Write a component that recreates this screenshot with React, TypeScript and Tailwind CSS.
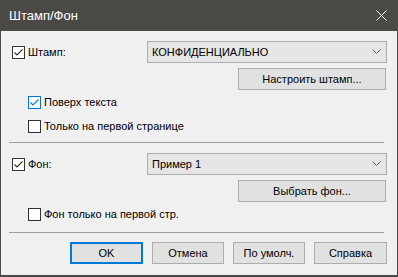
import React from "react";

const font = { fontFamily: '"Liberation Sans", Arial, sans-serif' };

function Check({ checked, focus }: { checked?: boolean; focus?: boolean }) {
  const border = focus ? "border-[#0078d7]" : "border-[#333333]";
  const stroke = focus ? "#0078d7" : "#333333";
  return (
    <div className={`w-[13px] h-[13px] border ${border} bg-white flex items-center justify-center shrink-0`}>
      {checked && (
        <svg width="11" height="11" viewBox="0 0 11 11">
          <path d="M1.5 5.5 L4 8 L9.5 2.5" fill="none" stroke={stroke} strokeWidth="1.1" />
        </svg>
      )}
    </div>
  );
}

function Combo({ text }: { text: string }) {
  return (
    <div className="w-[240px] h-[22px] border border-[#adadad] bg-[#e5e5e5] flex items-center pl-[4px] pr-[5px]">
      <span className="flex-1 text-[11px] text-black leading-none">{text}</span>
      <svg width="9" height="6" viewBox="0 0 9 6">
        <path d="M0.5 0.5 L4.5 4.5 L8.5 0.5" fill="none" stroke="#606060" strokeWidth="1" />
      </svg>
    </div>
  );
}

function Btn({ text, w, primary }: { text: string; w: string; primary?: boolean }) {
  return (
    <div
      className={`${w} h-[22px] ${primary ? "border-2 border-[#0078d7]" : "border border-[#adadad]"} bg-[#e1e1e1] flex items-center justify-center text-[11px] text-black leading-none`}
    >
      {text}
    </div>
  );
}

export default function App() {
  return (
    <div className="w-[398px] h-[277px] bg-[#4b4946] flex flex-col" style={font}>
      <div className="h-[31px] flex items-center pl-[9px] pr-[11px] shrink-0">
        <span className="text-white text-[13px] leading-none flex-1">Штамп/Фон</span>
        <svg width="11" height="11" viewBox="0 0 11 11">
          <path d="M0.5 0.5 L10.5 10.5 M10.5 0.5 L0.5 10.5" stroke="#ffffff" strokeWidth="1" />
        </svg>
      </div>
      <div className="flex-1 mx-[1px] mb-[2px] bg-[#f0f0f0] flex flex-col">
        {/* Stamp row */}
        <div className="mt-[10px] h-[22px] flex items-center">
          <div className="ml-[11px] w-[135px] flex items-center gap-[3px]">
            <Check checked />
            <span className="text-[11px] text-black leading-none">Штамп:</span>
          </div>
          <Combo text="КОНФИДЕНЦИАЛЬНО" />
        </div>
        <div className="mt-[5px] flex">
          <div className="ml-[237px]">
            <Btn text="Настроить штамп..." w="w-[148px]" />
          </div>
        </div>
        <div className="mt-[6px] ml-[27px] h-[13px] flex items-center gap-[3px]">
          <Check checked focus />
          <span className="text-[11px] text-black leading-none">Поверх текста</span>
        </div>
        <div className="mt-[11px] ml-[27px] h-[13px] flex items-center gap-[3px]">
          <Check />
          <span className="text-[11px] text-black leading-none">Только на первой странице</span>
        </div>
        <div className="mt-[9px] ml-[8px] w-[375px] h-px bg-[#a0a0a0]" />
        {/* Background row */}
        <div className="mt-[10px] h-[22px] flex items-center">
          <div className="ml-[11px] w-[135px] flex items-center gap-[3px]">
            <Check checked />
            <span className="text-[11px] text-black leading-none">Фон:</span>
          </div>
          <Combo text="Пример 1" />
        </div>
        <div className="mt-[5px] flex">
          <div className="ml-[237px]">
            <Btn text="Выбрать фон..." w="w-[148px]" />
          </div>
        </div>
        <div className="mt-[6px] ml-[27px] h-[13px] flex items-center gap-[3px]">
          <Check />
          <span className="text-[11px] text-black leading-none">Фон только на первой стр.</span>
        </div>
        <div className="mt-[11px] ml-[8px] w-[375px] h-px bg-[#a0a0a0]" />
        <div className="mt-[9px] ml-[69px] flex gap-[9px]">
          <Btn text="OK" w="w-[73px]" primary />
          <Btn text="Отмена" w="w-[72px]" />
          <Btn text="По умолч." w="w-[72px]" />
          <Btn text="Справка" w="w-[73px]" />
        </div>
      </div>
    </div>
  );
}
